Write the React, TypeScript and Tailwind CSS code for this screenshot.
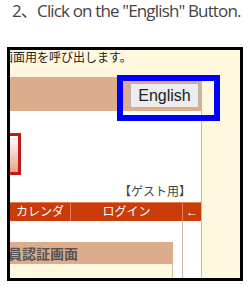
import React from 'react';

// Step screenshot: instruction title above a cropped page capture, with the blue highlight over the button
const App: React.FC = () => {
  return (
    <div className="relative w-[250px] h-[292px] bg-white overflow-hidden" style={{ fontFamily: '"Liberation Sans", "Noto Sans CJK JP", sans-serif' }}>
      {/* Step title */}
      <div className="pl-[12px] h-[47px] text-[17px] leading-[22px] tracking-[-0.85px] text-[#444] whitespace-nowrap" style={{ fontFamily: '"Open Sans", "Noto Sans CJK JP", sans-serif' }}>
        2、Click on the "English" Button.
      </div>

      {/* Cropped capture */}
      <div className="ml-[7px] w-[236px] h-[234px] border-[3px] border-black bg-[#fff7de] overflow-hidden">
        <div className="ml-[-9px] h-[16px] text-[12px] leading-[16px] text-[#222] whitespace-nowrap">
          画面用を呼び出します。
        </div>

        <div className="mt-[11px] w-[192px] bg-white border-r border-[#cdb9a2]">
          {/* Header bar with language button */}
          <div className="h-[34px] bg-[#dcad8b] flex justify-end items-start pt-[6px] pr-[2px]">
            <button className="w-[69px] h-[25px] bg-[#ededed] border border-[#b4b4b4] text-[16px] leading-[22px] text-[#222]">
              English
            </button>
          </div>

          {/* Logo area */}
          <div className="h-[91px] flex flex-col">
            <div className="mt-[22px] ml-[-9px] w-[20px] h-[42px] border-[3px] border-[#c01a1a] bg-gradient-to-b from-white to-[#e8a489]" />
            <div className="mt-[9px] pr-[10px] text-right text-[12px] leading-[16px] text-[#444]">【ゲスト用】</div>
          </div>

          {/* Nav bar */}
          <div className="h-[19px] flex bg-[#c93c0a] border-t border-[#e58255] text-white text-[12px] leading-[18px]">
            <div className="w-[60px] text-center">カレンダ</div>
            <div className="w-[112px] border-l border-[#e58255] text-center">ログイン</div>
            <div className="flex-1 border-l border-[#e58255] text-center">←</div>
          </div>

          {/* Body */}
          <div className="h-[57px] flex">
            <div className="w-[163px] flex flex-col">
              <div className="h-[21px]" />
              <div className="h-[22px] bg-[#dcad8b] overflow-hidden whitespace-nowrap">
                <span className="ml-[-16px] text-[14px] leading-[22px] font-bold text-[#555]">会員認証画面</span>
              </div>
              <div className="flex-1 bg-[#fff7de] border-r border-[#d8bea4]" />
            </div>
            <div className="w-[9px]" />
            <div className="flex-1 border-l border-[#cdb9a2]" />
          </div>
        </div>
      </div>

      {/* Highlight */}
      <div className="absolute left-[117px] top-[75px] w-[103px] h-[46px] border-[6px] border-[#0000ff]" />
    </div>
  );
};

export default App;
